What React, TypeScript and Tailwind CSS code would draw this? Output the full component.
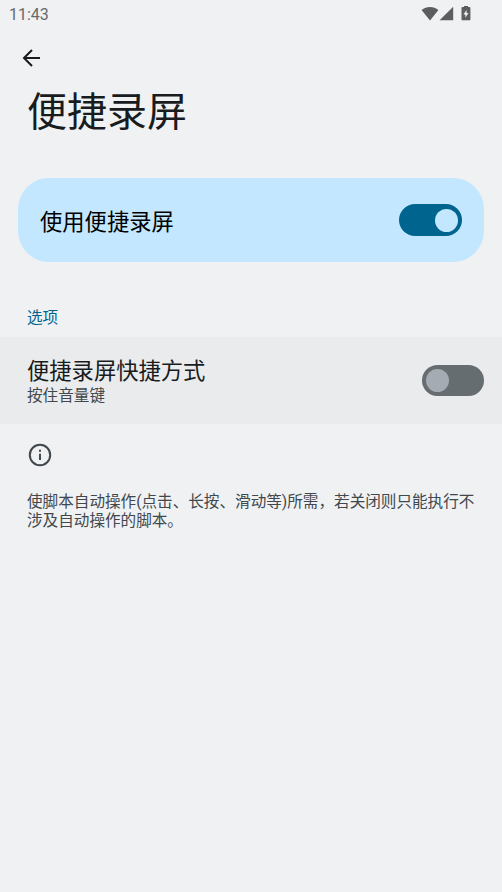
function StatusIcons() {
  return (
    <div className="flex items-center pb-px text-[#5c5d5e]">
      <svg className="h-[15px] w-[18px]" viewBox="0 0 18 15" fill="currentColor">
        <path d="M9 14.4.6 4C3 2 5.8.9 9 .9S15 2 17.4 4Z" />
      </svg>
      <svg className="h-[15px] w-[15px]" viewBox="0 0 15 15" fill="currentColor">
        <path d="M14.2.8v13.5H.6Z" />
      </svg>
      <svg className="ml-[7px] h-[15px] w-[10px]" viewBox="0 0 10 15" fill="currentColor">
        <path
          fillRule="evenodd"
          d="M3 0h4v1.1h1.5c.5 0 .9.4.9.9v11.4c0 .5-.4.9-.9.9H1.4a.9.9 0 0 1-.9-.9V2c0-.5.4-.9.9-.9H3ZM5.6 3.9 2.4 8.5h1.9v3.3L7.5 7H5.6Z"
        />
      </svg>
    </div>
  );
}

function Toggle({ on = false }: { on?: boolean }) {
  return (
    <button
      role="switch"
      aria-checked={on}
      className={`flex h-[31.5px] shrink-0 items-center rounded-full px-[4px] ${
        on ? "w-[63px] justify-end bg-[#00658e]" : "w-[62.5px] justify-start bg-[#656d70]"
      }`}
    >
      <span className={`size-[23px] rounded-full ${on ? "bg-[#c3e7ff]" : "bg-[#a5abb3]"}`} />
    </button>
  );
}

export default function App() {
  return (
    <div className="flex h-[892px] w-[502px] flex-col overflow-hidden bg-[#eff1f3] font-[Roboto,'Noto_Sans_CJK_SC',sans-serif] text-[#191c1e]">
      <div className="flex h-7 shrink-0 items-center justify-between pr-[31px] pl-[9px]">
        <span className="pt-px text-[16px] leading-7 text-[#68696b]">11:43</span>
        <StatusIcons />
      </div>

      <header>
        <button aria-label="返回" className="mt-[19px] ml-[20px] block size-[22px]">
          <svg className="size-[22px]" viewBox="0 0 22 22" fill="none" stroke="currentColor" strokeWidth="2">
            <path d="M20 11H4M12 3 4 11l8 8" />
          </svg>
        </button>
        <h1 className="mt-[14px] ml-[27px] text-[40px] leading-[60px]">便捷录屏</h1>
      </header>

      <section className="mx-[18px] mt-[35px] flex h-[84px] shrink-0 items-center justify-between rounded-[31px] bg-[#c3e7ff] pr-[22px] pl-[22px]">
        <span className="pt-[3px] text-[22.3px] leading-8 text-black">使用便捷录屏</span>
        <Toggle on />
      </section>

      <h2 className="mt-[45px] ml-[27px] text-[15.6px] leading-[22px] text-[#00658e]">选项</h2>

      <section className="mt-[8px] flex h-[87px] shrink-0 items-center justify-between bg-[#eaebed] pr-[18px] pl-[27px]">
        <div className="pt-[2px]">
          <div className="text-[22.3px] leading-[28px]">便捷录屏快捷方式</div>
          <div className="text-[15.6px] leading-[22px] text-[#41484d]">按住音量键</div>
        </div>
        <Toggle />
      </section>

      <footer className="px-[27px] text-[#41484d]">
        <svg className="mt-[18px] size-[26px]" viewBox="0 0 26 26" fill="none" stroke="currentColor" strokeWidth="2">
          <circle cx="13" cy="13" r="10.2" />
          <path d="M13 11.8v6.2M13 7.7v2" />
        </svg>
        <p className="mt-[25px] w-[452px] text-[15.6px] leading-[18.5px]">
          使脚本自动操作(点击、长按、滑动等)所需，若关闭则只能执行不涉及自动操作的脚本。
        </p>
      </footer>
    </div>
  );
}
